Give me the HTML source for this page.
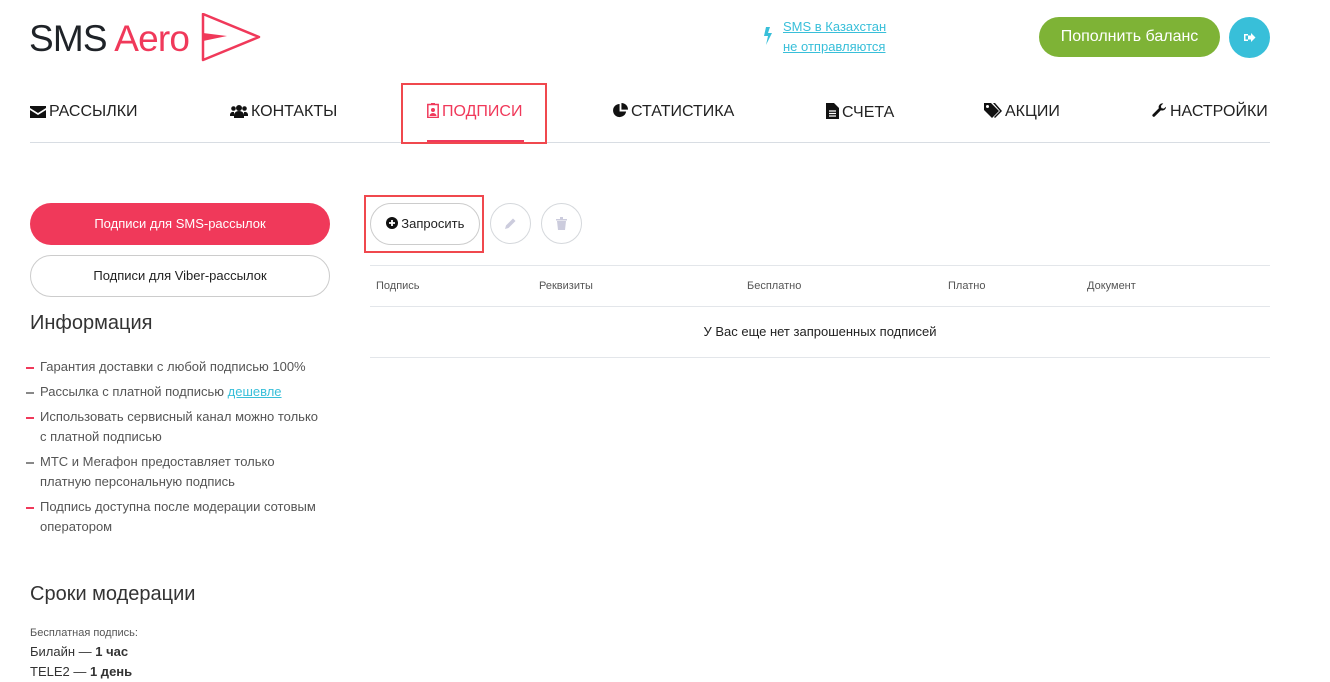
<!DOCTYPE html>
<html><head><meta charset="utf-8"><style>
*{margin:0;padding:0;box-sizing:border-box}
body{width:1330px;height:673px;overflow:hidden;background:#fff;font-family:"Liberation Sans","DejaVu Sans",sans-serif;color:#222;position:relative}
.a{position:absolute}
.logo{left:29px;top:18px;font-size:37px;font-weight:300;letter-spacing:-0.8px;color:#1f2328}
.logo span{color:#f0395a}
.nav{top:103px;font-size:16px;color:#222;white-space:nowrap}
.nav svg{vertical-align:-2px;margin-right:3px}
.btn{border-radius:22px;text-align:center;font-size:13px}
ul{list-style:none}
li{position:relative;padding-left:14px;font-size:13px;color:#555;line-height:20px;margin-bottom:5px}
li:before{content:"";position:absolute;left:0;top:10px;width:8px;height:1.5px;background:#f0395a}
li.g:before{background:#888}
</style></head><body>
<div class="a logo">SMS <span>Aero</span></div>
<svg class="a" style="left:198px;top:13px" width="64" height="50" viewBox="0 0 64 50"><path d="M5 1 L61 24 L5 47 Z" fill="none" stroke="#f0395a" stroke-width="2.5" stroke-linejoin="round"/><path d="M5 20 L29 23 L5 28 Z" fill="#f0395a"/></svg>
<svg class="a" style="left:763px;top:27px" width="10" height="18" viewBox="0 0 10 18"><path d="M3 0 L1 9 L5 9 L3 18 L9 6 L5 6 L7 0Z" fill="#38bfd9"/></svg>
<div class="a" style="left:783px;top:17px;font-size:13px;line-height:20px;color:#38bfd9;text-decoration:underline">SMS в Казахстан<br>не отправляются</div>
<div class="a btn" style="left:1039px;top:17px;width:181px;height:40px;background:#7eb336;color:#fff;font-size:16px;line-height:40px;border-radius:20px">Пополнить баланс</div>
<div class="a" style="left:1229px;top:17px;width:41px;height:41px;border-radius:50%;background:#38bfd9"><svg style="margin:15px 0 0 14px" width="13" height="11" viewBox="0 0 13 11"><path d="M1 2h4v1.5H2.5v4H5V9H1Z M5 3.5h3V1l4.5 4.5L8 10V7.5H5Z" fill="#fff"/></svg></div>

<div class="a nav" style="left:30px"><svg width="16" height="12" viewBox="0 0 16 12"><path d="M0 0h16v2L8 7 0 2Z M0 4l8 5 8-5v8H0Z" fill="#111"/></svg>РАССЫЛКИ</div>
<div class="a nav" style="left:230px"><svg width="18" height="14" viewBox="0 0 18 14"><circle cx="9" cy="4" r="3" fill="#111"/><circle cx="3.5" cy="4.5" r="2.3" fill="#111"/><circle cx="14.5" cy="4.5" r="2.3" fill="#111"/><path d="M4 14v-3a5 4 0 0 1 10 0v3Z M0 11a3 3 0 0 1 4-3v4H0Z M18 11a3 3 0 0 0-4-3v4h4Z" fill="#111"/></svg>КОНТАКТЫ</div>
<div class="a nav" style="left:427px;color:#f0395a"><svg width="12" height="15" viewBox="0 0 12 15"><rect x="0.8" y="1.5" width="10.4" height="13" fill="none" stroke="#f0395a" stroke-width="1.5"/><circle cx="6" cy="7" r="2" fill="#f0395a"/><path d="M2.5 13a3.5 3 0 0 1 7 0Z" fill="#f0395a"/><rect x="4" y="0" width="4" height="2" fill="#f0395a"/></svg>ПОДПИСИ</div>
<div class="a" style="left:30px;top:142px;width:1240px;height:1px;background:#d8dde3"></div>
<div class="a" style="left:401px;top:83px;width:146px;height:61px;border:2px solid #f0484e"></div>
<div class="a" style="left:427px;top:140px;width:97px;height:2px;background:#f0395a"></div>
<div class="a nav" style="left:613px"><svg width="15" height="15" viewBox="0 0 16 16"><path d="M7 1A7 7 0 1 0 14 9H7Z" fill="#111"/><path d="M9 0v7h7A7 7 0 0 0 9 0Z" fill="#111"/></svg>СТАТИСТИКА</div>
<div class="a nav" style="left:826px"><svg width="13" height="16" viewBox="0 0 13 16"><path d="M0 0h8l5 5v11H0Z" fill="#111"/><path d="M3 8h7M3 10.5h7M3 13h7" stroke="#fff" stroke-width="1.2"/></svg>СЧЕТА</div>
<div class="a nav" style="left:984px"><svg width="18" height="15" viewBox="0 0 18 15"><path d="M0 0h7l8 8-7 7-8-8Z" fill="#111"/><circle cx="3.5" cy="3.5" r="1.5" fill="#fff"/><path d="M9 0h2l7 8-7 7-1-1 6-6Z" fill="#111"/></svg>АКЦИИ</div>
<div class="a nav" style="left:1152px"><svg width="15" height="15" viewBox="0 0 16 16"><path d="M15 4a4 4 0 0 1-5.5 3.7L3 14.2a1.5 1.5 0 0 1-2.2-2.1L7.3 5.6A4 4 0 0 1 12 0.5L9.5 3l.5 2.5 2.5.5Z" fill="#111"/></svg>НАСТРОЙКИ</div>

<div class="a btn" style="left:30px;top:203px;width:300px;height:42px;line-height:42px;background:#f0395a;color:#fff">Подписи для SMS-рассылок</div>
<div class="a btn" style="left:30px;top:255px;width:300px;height:42px;line-height:40px;border:1px solid #ccc;color:#222">Подписи для Viber-рассылок</div>
<div class="a" style="left:30px;top:312px;font-size:20px;font-weight:300;color:#333">Информация</div>
<ul class="a" style="left:26px;top:357px;width:302px">
<li>Гарантия доставки с любой подписью 100%</li>
<li class="g">Рассылка с платной подписью <span style="color:#38bfd9;text-decoration:underline">дешевле</span></li>
<li>Использовать сервисный канал можно только с платной подписью</li>
<li class="g">МТС и Мегафон предоставляет только платную персональную подпись</li>
<li>Подпись доступна после модерации сотовым оператором</li>
</ul>
<div class="a" style="left:30px;top:583px;font-size:20px;font-weight:300;color:#333">Сроки модерации</div>
<div class="a" style="left:30px;top:627px;font-size:11px;color:#555">Бесплатная подпись:</div>
<div class="a" style="left:30px;top:642px;font-size:13px;color:#333;line-height:20px">Билайн — <b>1 час</b><br>TELE2 — <b>1 день</b></div>

<div class="a" style="left:364px;top:195px;width:120px;height:58px;border:2px solid #f0484e"></div>
<div class="a btn" style="left:370px;top:203px;width:110px;height:42px;line-height:40px;border:1px solid #ccc;border-radius:21px;color:#222"><svg width="12" height="12" viewBox="0 0 12 12" style="vertical-align:-1px"><circle cx="6" cy="6" r="6" fill="#111"/><path d="M6 3v6M3 6h6" stroke="#fff" stroke-width="1.8"/></svg> Запросить</div>
<div class="a" style="left:490px;top:203px;width:41px;height:41px;border-radius:50%;border:1px solid #d5d8dc"><svg style="margin:13px" width="13" height="13" viewBox="0 0 13 13"><path d="M1 12l1-3.5 7-7 2.5 2.5-7 7Z" fill="#ccd"/></svg></div>
<div class="a" style="left:541px;top:203px;width:41px;height:41px;border-radius:50%;border:1px solid #d5d8dc"><svg style="margin:13px 0 0 14px" width="11" height="13" viewBox="0 0 11 13"><path d="M0 2h11v1.5H0Z M4 0h3v2H4Z M1 4h9l-1 9H2Z" fill="#ccd"/></svg></div>
<div class="a" style="left:370px;top:265px;width:900px;height:1px;background:#e3e6ea"></div>
<div class="a" style="left:376px;top:280px;font-size:11px;color:#555">Подпись</div>
<div class="a" style="left:539px;top:280px;font-size:11px;color:#555">Реквизиты</div>
<div class="a" style="left:747px;top:280px;font-size:11px;color:#555">Бесплатно</div>
<div class="a" style="left:948px;top:280px;font-size:11px;color:#555">Платно</div>
<div class="a" style="left:1087px;top:280px;font-size:11px;color:#555">Документ</div>
<div class="a" style="left:370px;top:306px;width:900px;height:1px;background:#e3e6ea"></div>
<div class="a" style="left:370px;top:324px;width:900px;text-align:center;font-size:13px;color:#222">У Вас еще нет запрошенных подписей</div>
<div class="a" style="left:370px;top:357px;width:900px;height:1px;background:#e3e6ea"></div>
</body></html>
